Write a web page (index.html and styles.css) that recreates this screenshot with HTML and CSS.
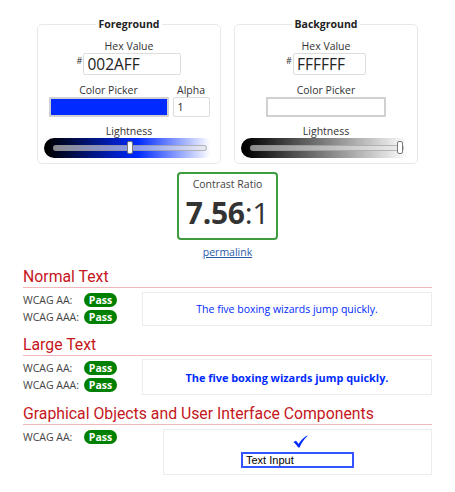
FILE: index.html
```html
<!DOCTYPE html>
<html lang="en">
<head>
<meta charset="utf-8">
<title>Contrast Checker</title>
<link rel="stylesheet" href="styles.css">
</head>
<body>
<div class="pickers">
  <fieldset class="picker">
    <legend>Foreground</legend>
    <div class="lbl lbl-first">Hex Value</div>
    <div class="hexrow"><span class="hash">#</span><input class="hex hex-fg" type="text" value="002AFF"></div>
    <div class="colorrow">
      <div class="col">
        <div class="lbl">Color Picker</div>
        <div class="swatch swatch-fg"></div>
      </div>
      <div class="col">
        <div class="lbl">Alpha</div>
        <input class="alpha" type="text" value="1">
      </div>
    </div>
    <div class="lbl lbl-light">Lightness</div>
    <div class="slider slider-fg"><div class="track"><span class="thumb" style="left: calc((100% - 6px) * 0.5)"></span></div></div>
  </fieldset>
  <fieldset class="picker">
    <legend>Background</legend>
    <div class="lbl lbl-first">Hex Value</div>
    <div class="hexrow"><span class="hash">#</span><input class="hex hex-bg" type="text" value="FFFFFF"></div>
    <div class="colorrow">
      <div class="col">
        <div class="lbl">Color Picker</div>
        <div class="swatch swatch-bg"></div>
      </div>
    </div>
    <div class="lbl lbl-light">Lightness</div>
    <div class="slider slider-bg"><div class="track"><span class="thumb" style="left: calc((100% - 6px) * 1)"></span></div></div>
  </fieldset>
</div>

<div class="ratio-box">
  <div class="ratio-label">Contrast Ratio</div>
  <div class="ratio"><b>7.56</b>:1</div>
</div>
<div class="permalink"><a href="#">permalink</a></div>

<section class="result">
  <h2>Normal Text</h2>
  <div class="row">
    <div class="checks">
      <div class="check"><span class="clabel">WCAG AA:</span><span class="badge">Pass</span></div>
      <div class="check"><span class="clabel">WCAG AAA:</span><span class="badge">Pass</span></div>
    </div>
    <div class="sample sample-normal">The five boxing wizards jump quickly.</div>
  </div>
</section>

<section class="result">
  <h2>Large Text</h2>
  <div class="row">
    <div class="checks">
      <div class="check"><span class="clabel">WCAG AA:</span><span class="badge">Pass</span></div>
      <div class="check"><span class="clabel">WCAG AAA:</span><span class="badge">Pass</span></div>
    </div>
    <div class="sample sample-large">The five boxing wizards jump quickly.</div>
  </div>
</section>

<section class="result">
  <h2>Graphical Objects and User Interface Components</h2>
  <div class="row">
    <div class="checks checks-wide">
      <div class="check"><span class="clabel">WCAG AA:</span><span class="badge">Pass</span></div>
    </div>
    <div class="sample sample-ui">
      <svg class="tick" width="15" height="13" viewBox="0 0 15 13" aria-hidden="true"><path d="M0.6 7.2 C1.6 6.3 2.3 5.9 3 5.8 C3.9 6.6 4.8 7.8 5.6 9 C7.6 5.6 10.4 2.4 14.2 0.4 L14.6 1 C11.4 3.6 8.6 7.6 6.6 12.6 L5.2 12.6 C3.8 10.4 2.4 8.6 0.6 7.2 Z" fill="#002AFF"/></svg>
      <input class="textinput" type="text" value="Text Input">
    </div>
  </div>
</section>
</body>
</html>
```
FILE: styles.css
```css
* { box-sizing: border-box; }

body {
  margin: 0;
  padding: 0 23px;
  font-family: "Open Sans", "DejaVu Sans", sans-serif;
  color: #333;
  background: #fff;
}

.pickers {
  display: flex;
  justify-content: center;
  gap: 13px;
  padding-top: 17px;
}

.picker {
  width: 184px;
  min-width: 0;
  margin: 0;
  padding: 0 6px 5px;
  border: 1px solid #e8e8e8;
  border-radius: 5px;
  text-align: center;
}

.picker legend {
  margin: 0 auto;
  padding: 0 3px;
  font-size: 10.5px;
  line-height: 14px;
  font-weight: 700;
  color: #222;
}

.lbl {
  font-size: 10.5px;
  line-height: 14px;
  color: #333;
  margin-top: 8px;
}

.lbl-first { margin-top: 8px; }
.lbl-light { margin-top: 7px; }

.hexrow {
  display: flex;
  justify-content: center;
  align-items: flex-start;
}

.hash {
  font-size: 9px;
  line-height: 12px;
  margin-top: 2px;
  margin-right: 1px;
  color: #333;
}

.hex {
  height: 22px;
  margin: 0;
  padding: 0 3px;
  border: 1px solid #ddd;
  border-radius: 2px;
  font-family: "Open Sans", sans-serif;
  font-size: 15.5px;
  color: #222;
  background: #fff;
}

.hex-fg { width: 98px; }
.hex-bg { width: 73px; }

.colorrow {
  display: flex;
  justify-content: center;
  gap: 4px;
}

.col { display: flex; flex-direction: column; align-items: center; }

.colorrow .lbl { margin-top: 8px; }

.swatch {
  width: 120px;
  height: 20px;
  border: 2px solid #d0d0d0;
  border-radius: 1px;
}

.swatch-fg { background: #002AFF; }
.swatch-bg { background: #fff; }

.alpha {
  width: 37px;
  height: 20px;
  margin: 0;
  padding: 0 4px;
  border: 1px solid #ddd;
  border-radius: 2px;
  font-family: "Open Sans", sans-serif;
  font-size: 10.5px;
  color: #222;
  background: #fff;
}

.slider {
  height: 20px;
  border-radius: 10px;
  display: flex;
  align-items: center;
  padding: 0 7px 0 9px;
}

.slider-fg { background: linear-gradient(to right, #000 2%, #002AFF 55%, #ffffff 98%); }
.slider-bg { background: linear-gradient(to right, #000 2%, #ffffff 98%); }

.track {
  position: relative;
  flex: 1;
  height: 6px;
  border: 1px solid rgba(140, 140, 140, 0.55);
  border-radius: 3px;
  background: rgba(230, 230, 230, 0.6);
}

.thumb {
  position: absolute;
  top: -5px;
  width: 6px;
  height: 13px;
  background: #fff;
  border: 1px solid #777;
  border-radius: 2px;
}

.ratio-box {
  width: 101px;
  height: 68px;
  margin: 8px auto 0;
  padding-top: 3px;
  border: 2px solid #3e9c3e;
  border-radius: 4px;
  text-align: center;
}

.ratio-label {
  font-size: 10.5px;
  line-height: 14px;
  color: #444;
}

.ratio {
  font-size: 30px;
  line-height: 41px;
  margin-top: 1px;
  color: #333;
  letter-spacing: -0.3px;
}

.ratio b { font-weight: 700; }

.permalink {
  margin-top: 5px;
  text-align: center;
  font-size: 10.5px;
  line-height: 14px;
}

.permalink a { color: #2c5aa8; }

.result { margin-top: 9px; }
.result + .result { margin-top: 10px; }

.result h2 {
  margin: 0;
  padding-bottom: 1px;
  font-family: Roboto, "Liberation Sans", sans-serif;
  font-weight: 400;
  font-size: 15.8px;
  line-height: 18px;
  color: #c5161d;
  border-bottom: 1px solid #f0b7bb;
}

.row {
  display: flex;
  align-items: flex-start;
  margin-top: 3px;
}

.checks { width: 119px; flex: none; }
.checks-wide { width: 140px; }

.check {
  display: flex;
  align-items: center;
  height: 17px;
}

.clabel {
  width: 61px;
  font-size: 10.5px;
  color: #444;
}

.badge {
  width: 33px;
  height: 14px;
  line-height: 14px;
  border-radius: 7px;
  background: #008000;
  color: #fff;
  font-weight: 700;
  font-size: 10.5px;
  text-align: center;
}

.sample {
  flex: 1;
  border: 1px solid #ececec;
  display: flex;
  align-items: center;
  justify-content: center;
  color: #002AFF;
  margin-top: 1px;
}

.sample-normal { height: 34px; font-size: 10.5px; }
.sample-large { height: 36px; font-size: 10.9px; font-weight: 700; margin-top: 0; }

.sample-ui {
  height: 46px;
  flex-direction: column;
  justify-content: flex-start;
  padding-top: 5px;
  gap: 4px;
}

.tick { display: block; margin-left: 6px; }

.textinput {
  width: 113px;
  height: 16px;
  margin: 0;
  padding: 0 3px;
  border: 2px solid #3354ff;
  border-radius: 0;
  font-family: "Liberation Sans", Arial, sans-serif;
  font-size: 11px;
  color: #000;
  background: #fff;
}
```
